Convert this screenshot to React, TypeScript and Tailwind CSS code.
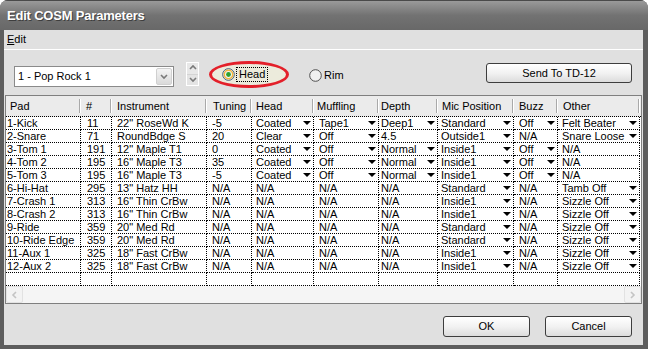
import React from "react";

const COLS = "grid grid-cols-[75px_31px_95px_45px_62px_65px_59px_76px_44px_82px]";

const HEADERS = ["Pad", "#", "Instrument", "Tuning", "Head", "Muffling", "Depth", "Mic Position", "Buzz", "Other"];
const HEAD_PAD = ["pl-[4px]", "pl-[5px]", "pl-[5px]", "pl-[6px]", "pl-[4px]", "pl-[3px]", "pl-[2px]", "pl-[4px]", "pl-[5px]", "pl-[5px]"];
const CELL_PAD = ["pl-[1px]", "pl-[6px]", "pl-[5px]", "pl-[5px]", "pl-[4px]", "pl-[5px]", "pl-[2px]", "pl-[3px]", "pl-[5px]", "pl-[4px]"];

const ROWS: { c: string[]; d: number[] }[] = [
  { c: ["1-Kick", "11", '22" RoseWd K', "-5", "Coated", "Tape1", "Deep1", "Standard", "Off", "Felt Beater"], d: [4, 5, 6, 7, 8, 9] },
  { c: ["2-Snare", "71", "RoundBdge S", "20", "Clear", "Off", "4.5", "Outside1", "N/A", "Snare Loose"], d: [4, 5, 7, 9] },
  { c: ["3-Tom 1", "191", '12" Maple T1', "0", "Coated", "Off", "Normal", "Inside1", "Off", "N/A"], d: [4, 5, 6, 7, 8] },
  { c: ["4-Tom 2", "195", '16" Maple T3', "35", "Coated", "Off", "Normal", "Inside1", "Off", "N/A"], d: [4, 5, 6, 7, 8] },
  { c: ["5-Tom 3", "195", '16" Maple T3', "-5", "Coated", "Off", "Normal", "Inside1", "Off", "N/A"], d: [4, 5, 6, 7, 8] },
  { c: ["6-Hi-Hat", "295", '13" Hatz HH', "N/A", "N/A", "N/A", "N/A", "Standard", "N/A", "Tamb Off"], d: [7, 9] },
  { c: ["7-Crash 1", "313", '16" Thin CrBw', "N/A", "N/A", "N/A", "N/A", "Inside1", "N/A", "Sizzle Off"], d: [7, 9] },
  { c: ["8-Crash 2", "313", '16" Thin CrBw', "N/A", "N/A", "N/A", "N/A", "Inside1", "N/A", "Sizzle Off"], d: [7, 9] },
  { c: ["9-Ride", "359", '20" Med Rd', "N/A", "N/A", "N/A", "N/A", "Standard", "N/A", "Sizzle Off"], d: [7, 9] },
  { c: ["10-Ride Edge", "359", '20" Med Rd', "N/A", "N/A", "N/A", "N/A", "Standard", "N/A", "Sizzle Off"], d: [7, 9] },
  { c: ["11-Aux 1", "325", '18" Fast CrBw', "N/A", "N/A", "N/A", "N/A", "Inside1", "N/A", "Sizzle Off"], d: [7, 9] },
  { c: ["12-Aux 2", "325", '18" Fast CrBw', "N/A", "N/A", "N/A", "N/A", "Inside1", "N/A", "Sizzle Off"], d: [7, 9] },
];

const DropArrow = () => (
  <svg width="8" height="4" viewBox="0 0 8 4" className="shrink-0">
    <polygon points="0,0 8,0 4,4" fill="#000" />
  </svg>
);

const XpButton = ({ label, className }: { label: string; className: string }) => (
  <div
    className={`flex items-center justify-center rounded-[3px] border border-[#3d3d3d] bg-linear-to-b from-[#ffffff] via-[#f2f2f2] to-[#dcdcdc] text-[11px] text-black ${className}`}
  >
    {label}
  </div>
);

const Chevron = ({ dir }: { dir: "up" | "down" | "left" | "right" }) => {
  const pts = {
    up: "1,5 4,2 7,5",
    down: "1,2 4,5 7,2",
    left: "5,1 2,4 5,7",
    right: "2,1 5,4 2,7",
  }[dir];
  return (
    <svg width="8" height="8" viewBox="0 0 8 8">
      <polyline points={pts} fill="none" stroke={dir === "left" || dir === "right" ? "#c4c4c4" : "#7a7a7a"} strokeWidth="1.6" />
    </svg>
  );
};

export default function App() {
  return (
    <div className="w-[648px] h-[349px] bg-[#5d5d5d] rounded-t-[8px] overflow-hidden flex flex-col font-['Liberation_Sans',Arial,sans-serif] text-[11px] text-black">
      {/* title bar */}
      <div className="h-[30px] shrink-0 flex items-center pl-[7px] bg-linear-to-b from-[#9a9a9a] via-[#727272] to-[#686868] border-t border-[#4a4a4a]">
        <span className="text-white font-bold text-[13px] tracking-[-0.2px] [text-shadow:1px_1px_0_#3e3e3e]">Edit COSM Parameters</span>
      </div>

      <div className="flex-1 ml-[4px] mr-[5px] mb-[4px] bg-[#e0e0e0] flex flex-col">
        {/* menu */}
        <div className="h-[20px] shrink-0 border-b border-white flex items-center pl-[3px]">
          <span>
            <span className="underline">E</span>dit
          </span>
        </div>

        {/* toolbar */}
        <div className="h-[45px] shrink-0 flex items-start">
          <div className="ml-[10px] mt-[16px] w-[160px] h-[21px] bg-white border border-[#8a8a8a] flex items-center justify-between pl-[3px] pr-[1px]">
            <span>1 - Pop Rock 1</span>
            <div className="w-[16px] h-[17px] rounded-[2px] border border-[#d0d0d0] bg-linear-to-b from-[#f4f4f4] to-[#dadada] flex items-center justify-center">
              <Chevron dir="down" />
            </div>
          </div>

          <div className="ml-[12px] mt-[12px] w-[13px] h-[24px] border border-white flex flex-col">
            <div className="flex-1 bg-[#e8e8e8] border-b border-[#d4d4d4] flex items-center justify-center">
              <Chevron dir="up" />
            </div>
            <div className="flex-1 bg-[#e4e4e4] flex items-center justify-center">
              <Chevron dir="down" />
            </div>
          </div>

          <div className="ml-[10px] mt-[11px] w-[80px] h-[27px] rounded-[50%] border-[3px] border-[#e3202a] bg-[#ecebdc] flex items-center pl-[10px]">
            <svg width="13" height="13" viewBox="0 0 13 13" className="shrink-0">
              <circle cx="6.5" cy="6.5" r="5.8" fill="#f6f6f2" stroke="#3b5a78" strokeWidth="1" />
              <circle cx="6.5" cy="6.5" r="4.2" fill="none" stroke="#f3b53c" strokeWidth="1.5" />
              <circle cx="6.5" cy="6.5" r="2.4" fill="#2ea12e" />
            </svg>
            <span className="ml-[1px] px-[2px] leading-[13px] border border-dotted border-black">Head</span>
          </div>

          <div className="ml-[20px] mt-[17px] flex items-center">
            <svg width="13" height="13" viewBox="0 0 13 13" className="shrink-0">
              <circle cx="6.5" cy="6.5" r="5.8" fill="#f0f0f0" stroke="#4e4e4e" strokeWidth="1" />
            </svg>
            <span className="ml-[2px]">Rim</span>
          </div>

          <XpButton label="Send To TD-12" className="ml-auto mr-[11px] mt-[13px] w-[146px] h-[20px]" />
        </div>

        {/* grid */}
        <div className="ml-[1px] w-[637px] h-[209px] shrink-0 border border-[#7f7f7f] bg-white flex flex-col">
          <div className={`${COLS} h-[21px] bg-[#ebebeb] border-b border-dotted border-black`}>
            {HEADERS.map((h, i) => (
              <div key={h} className={`flex items-center justify-between ${HEAD_PAD[i]}`}>
                <span>{h}</span>
                <span className="w-[2px] h-[14px] border-l border-[#a9a9a9] border-r border-r-white" />
              </div>
            ))}
          </div>
          {ROWS.map((r) => (
            <div key={r.c[0]} className={COLS}>
              {r.c.map((v, i) => (
                <div
                  key={i}
                  className={`h-[13px] leading-[12px] border-r border-b border-dotted border-black flex items-center justify-between pr-[2px] whitespace-nowrap overflow-hidden ${CELL_PAD[i]}`}
                >
                  <span>{v}</span>
                  {r.d.includes(i) && <DropArrow />}
                </div>
              ))}
            </div>
          ))}
          <div className={COLS}>
            {HEADERS.map((h) => (
              <div key={h} className="h-[13px] border-r border-b border-dotted border-black" />
            ))}
          </div>
          {/* horizontal scrollbar */}
          <div className="mt-auto h-[17px] flex bg-[#f5f5f5]">
            <div className="w-[17px] h-[17px] rounded-[2px] border border-[#e2e2e2] bg-[#f3f3f3] flex items-center justify-center">
              <Chevron dir="left" />
            </div>
            <div className="flex-1" />
            <div className="w-[17px] h-[17px] rounded-[2px] border border-[#e2e2e2] bg-[#f3f3f3] flex items-center justify-center">
              <Chevron dir="right" />
            </div>
          </div>
        </div>

        {/* dialog buttons */}
        <div className="flex justify-end gap-[15px] mt-[12px] mr-[11px]">
          <XpButton label="OK" className="w-[87px] h-[21px]" />
          <XpButton label="Cancel" className="w-[87px] h-[21px]" />
        </div>
      </div>
    </div>
  );
}
